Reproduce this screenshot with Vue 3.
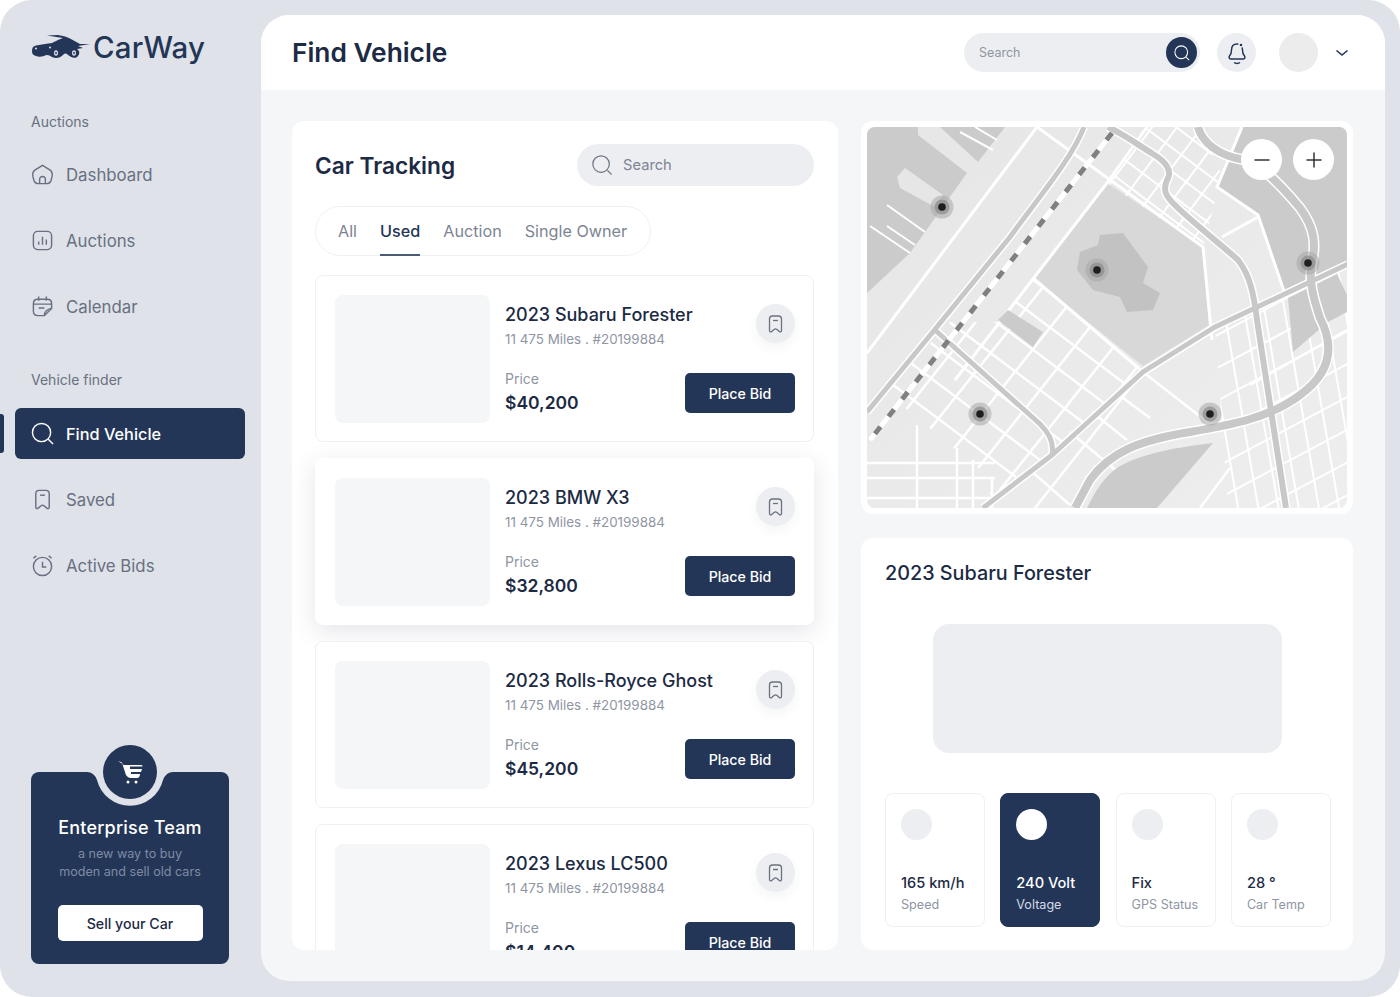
<script setup>
const cars = [
  { name: '2023 Subaru Forester', price: '$40,200' },
  { name: '2023 BMW X3', price: '$32,800', lifted: true },
  { name: '2023 Rolls-Royce Ghost', price: '$45,200' },
  { name: '2023 Lexus LC500', price: '$14,400' },
];
const stats = [
  { value: '165 km/h', label: 'Speed' },
  { value: '240 Volt', label: 'Voltage', active: true },
  { value: 'Fix', label: 'GPS Status' },
  { value: '28 °', label: 'Car Temp' },
];
const tabs = ['All', 'Used', 'Auction', 'Single Owner'];

// street grids of the map: two families of parallel lines round a centre point
const family = (cx, cy, dx, dy, step, n, len = 420) => {
  const out = [];
  for (let i = -n; i <= n; i++) {
    const ox = cx - dy * step * i;
    const oy = cy + dx * step * i;
    out.push({ x1: ox - dx * len, y1: oy - dy * len, x2: ox + dx * len, y2: oy + dy * len });
  }
  return out;
};
const blockGrid = [...family(1040, 390, 0.8, 0.6, 28, 7), ...family(1040, 390, 0.62, -0.78, 31, 7)];
const topGrid = [...family(1170, 170, 0.8, 0.6, 19, 5, 120), ...family(1170, 170, 0.6, -0.8, 20, 5, 120)];
const rightGrid = [...family(1280, 400, 0.17, 0.98, 20, 6, 200), ...family(1280, 400, 0.88, -0.47, 29, 6, 200)];
const pins = [[942, 207], [1097, 270], [1308, 263], [980, 414], [1210, 414]];

// the same centre lines are stroked twice: white casing, then grey road
const roads = [
  { d: 'M1084 127C1072 158 1040 196 1010 237L932 333L867 412', w: 5 },
  { d: 'M1108 127C1125 135 1140 146 1153 154C1165 161 1172 170 1168 178C1162 190 1165 196 1177 207C1190 220 1225 248 1238 260C1250 275 1254 295 1257 320L1286 508', w: 6 },
  { d: 'M1348 264L1215 327L1143 372L1052 455L983 508', w: 5 },
  { d: 'M935 330L1040 424C1052 436 1054 446 1052 455', w: 5 },
  { d: 'M1198 127C1202 142 1218 156 1245 160C1262 165 1285 190 1300 208C1315 228 1316 245 1312 262C1308 280 1314 300 1320 318C1334 345 1332 372 1300 395C1270 418 1230 425 1190 432C1140 440 1110 452 1090 480L1075 508', w: 8 },
];
</script>

<template>
  <div class="frame">
    <aside class="side">
      <div class="logo">
        <svg class="logo-mark" width="60" height="27" viewBox="0 0 60 27">
          <path d="M1 17C1 14 2 12 5 11.500L14 10L21 9L27 6L32 4L16 1.500L27 1C33 2 36 3 39 4.500L49 10L59 10L47 12L52 14L46 15C49 17 49 20 46 23C43 25 40 23 37 21C35 19 34 19 32 21C29 24 25 25 21 23C18 21 16 20 13 22C10 23 7 23 5 22C2 21 1 20 1 17Z" fill="#233657" />
          <ellipse cx="25" cy="19" rx="2" ry="2.800" fill="#dfe2e8" />
          <ellipse cx="25" cy="19" rx=".8" ry="1.300" fill="#233657" />
          <ellipse cx="43" cy="19" rx="2" ry="2.800" fill="#dfe2e8" />
          <ellipse cx="43" cy="19" rx=".8" ry="1.300" fill="#233657" />
          <circle cx="19" cy="13.500" r="1" fill="#dfe2e8" />
          <circle cx="5" cy="14.500" r="1" fill="#dfe2e8" />
        </svg>
        <span class="logo-text">CarWay</span>
      </div>

      <p class="nav-label first">Auctions</p>
      <a class="nav-item">
        <svg class="nav-ico" viewBox="0 0 24 24"><path d="M12 2.500L20 7.500C22 9 22.500 11 22 14L21 18C20.300 20.500 18.500 21.500 16 21.500H8C5.500 21.500 3.700 20.500 3 18L2 14C1.500 11 2 9 4 7.500Z" /><path d="M9 21.500V17C9 15.300 10.300 14 12 14S15 15.300 15 17V21.500" /></svg>
        Dashboard
      </a>
      <a class="nav-item">
        <svg class="nav-ico" viewBox="0 0 24 24"><rect x="2.500" y="2.500" width="19" height="19" rx="4.500" /><path d="M8 13V16.500M12 8V16.500M16 11V16.500" /></svg>
        Auctions
      </a>
      <a class="nav-item">
        <svg class="nav-ico" viewBox="0 0 24 24"><path d="M21.500 14V9C21.500 6 20 4.500 17 4.500H7C4 4.500 2.500 6 2.500 9V17C2.500 20 4 21.500 7 21.500H14Z" /><path d="M8 1.500V6M16 1.500V6M2.500 9.500H21.500M8 13.500H14M14 21.500C14 17 16 15 21.500 14" /></svg>
        Calendar
      </a>

      <p class="nav-label second">Vehicle finder</p>
      <div class="active-mark"></div>
      <a class="nav-item active">
        <svg class="nav-ico" viewBox="0 0 24 24"><circle cx="11" cy="11" r="9.500" /><path d="M18 18L23 23" /></svg>
        Find Vehicle
      </a>
      <a class="nav-item">
        <svg class="nav-ico" viewBox="0 0 24 24"><path d="M5 6C5 4 6.500 2.500 8.500 2.500H15.500C17.500 2.500 19 4 19 6V20C19 21.500 17.500 22 16.500 21L13.500 18.500C12.500 17.700 11.500 17.700 10.500 18.500L7.500 21C6.500 22 5 21.500 5 20Z" /><path d="M9.500 7.500H14.500" /></svg>
        Saved
      </a>
      <a class="nav-item">
        <svg class="nav-ico" viewBox="0 0 24 24"><circle cx="12" cy="13" r="9.500" /><path d="M12 8V13.500H16M2.500 4.500L5.500 2M21.500 4.500L18.500 2" /></svg>
        Active Bids
      </a>

      <div class="promo">
        <svg class="promo-notch" width="90" height="36" viewBox="0 0 90 36"><path d="M2 0Q9 0 12 8A34 34 0 0 0 78 8Q81 0 88 0Z" fill="#dfe2e8" /></svg>
        <div class="promo-badge">
          <svg width="26" height="24" viewBox="0 0 26 24">
            <path d="M1 1L5 2.500C6 6 7 9 8 12C9 16 11 18 15 18H20C22 18 23 16 23 14H14V12H24L25 9H13V6.500H25.500C25.500 5.500 25 5 24 5H7Z" fill="#fff" />
            <circle cx="11" cy="22" r="1.500" fill="#fff" /><circle cx="19" cy="22" r="1.500" fill="#fff" />
          </svg>
        </div>
        <h4>Enterprise Team</h4>
        <p>a new way to buy<br>moden and sell old cars</p>
        <button class="sell">Sell your Car</button>
      </div>
    </aside>

    <main class="main">
      <header class="top">
        <h1>Find Vehicle</h1>
        <div class="top-search">
          <span>Search</span>
          <i class="top-search-btn">
            <svg width="18" height="18" viewBox="0 0 24 24" fill="none" stroke="#fff" stroke-width="1.400"><circle cx="11" cy="11" r="8.500" /><path d="M17.500 17.500L21.500 21.500" /></svg>
          </i>
        </div>
        <i class="bell">
          <svg width="20" height="24" viewBox="0 0 20 24" fill="none" stroke="#233657" stroke-width="1.500">
            <path d="M10 3C6 3 4.500 6 4.500 9C4.500 12 4 13.500 2.500 15C1.500 16.500 2.500 18 4 18H16C17.500 18 18.500 16.500 17.500 15C16 13.500 15.500 12 15.500 9C15.500 6 14 3 10 3Z" />
            <path d="M7 21.500C8.500 22.800 11.500 22.800 13 21.500" /><circle cx="14" cy="4" r="2" fill="#233657" stroke="#eceef1" />
          </svg>
        </i>
        <i class="avatar"></i>
        <svg class="chev" width="14" height="14" viewBox="0 0 14 14" fill="none" stroke="#233657" stroke-width="1.600"><path d="M1.500 4.500L7 9L12.500 4.500" /></svg>
      </header>

      <div class="body">
        <section class="list-card">
          <div class="list-head">
            <h2>Car Tracking</h2>
            <div class="list-search">
              <svg width="22" height="22" viewBox="0 0 24 24" fill="none" stroke="#6c7280" stroke-width="1.300"><circle cx="11" cy="11" r="9" /><path d="M18 18L22.500 22.500" /></svg>
              <span>Search</span>
            </div>
          </div>
          <div class="tabs">
            <span v-for="t in tabs" :key="t" class="tab" :class="{ on: t === 'Used' }">{{ t }}</span>
          </div>
          <article v-for="c in cars" :key="c.name" class="car" :class="{ lifted: c.lifted }">
            <div class="car-pic"></div>
            <div class="car-info">
              <div class="car-top">
                <div>
                  <h3>{{ c.name }}</h3>
                  <p class="miles">11 475 Miles . #20199884</p>
                </div>
                <i class="mark">
                  <svg width="15" height="18" viewBox="0 0 15 18" fill="none" stroke="#6c7280" stroke-width="1.300"><path d="M1.500 4C1.500 2.300 2.800 1 4.500 1H10.500C12.200 1 13.500 2.300 13.500 4V15.500C13.500 17 12.200 17.300 11.300 16.500L9 14.500C8 13.700 7 13.700 6 14.500L3.700 16.500C2.800 17.300 1.500 17 1.500 15.500Z" /><path d="M5 5.500H10" /></svg>
                </i>
              </div>
              <div class="car-bottom">
                <div class="car-price">
                  <p class="price-label">Price</p>
                  <p class="price">{{ c.price }}</p>
                </div>
                <button class="bid">Place Bid</button>
              </div>
            </div>
          </article>
        </section>

        <div class="right">
          <section class="map-card">
            <svg class="map" width="480" height="381" viewBox="867 127 480 381">
              <defs>
                <clipPath id="cb"><path d="M1033 278L1143 372L1052 455L983 508L995 482L886 392L950 322L1000 322Z" /></clipPath>
                <clipPath id="ct"><path d="M1107 183L1147 127H1200L1222 175L1203 247Z" /></clipPath>
                <clipPath id="cr"><path d="M1215 328L1347 262V508H1260L1228 508Z" /></clipPath>
                <linearGradient id="band" x1="0" y1="0" x2="1" y2="1"><stop offset="0" stop-color="#e6e6e6" /><stop offset="1" stop-color="#eeeeee" /></linearGradient>
              </defs>
              <rect x="867" y="127" width="480" height="381" fill="url(#band)" />
              <path d="M867 127H918V135L967 173L910 253L867 293Z" fill="#cbcbcb" />
              <path d="M897 177L905 168L943 195L935 207L900 188Z" fill="#e6e6e6" />
              <path d="M940 127H1005L978 162Z" fill="#cbcbcb" />
              <path d="M1107 183L1203 247L1209 325L1143 366L1033 278Z" fill="#d8d8d8" />
              <path d="M1100 235L1123 233L1137 252L1148 267L1143 283L1160 293L1153 310L1127 312L1120 297L1093 290L1077 270L1080 252L1098 245Z" fill="#c2c2c2" />
              <path d="M1242 127H1347V264L1285 294L1258 215L1217 187Z" fill="#cbcbcb" />

              <g stroke="#fff" stroke-width="2" fill="none">
                <path d="M887 205L925 232M870 226L910 253M887 226L915 245M960 132L993 150M975 127L997 140" />
                <g clip-path="url(#cb)"><line v-for="(l, i) in blockGrid" :key="i" v-bind="l" stroke-width="2.500" /></g>
                <g clip-path="url(#ct)"><line v-for="(l, i) in topGrid" :key="i" v-bind="l" /></g>
                <g clip-path="url(#cr)"><line v-for="(l, i) in rightGrid" :key="i" v-bind="l" /></g>
                <path d="M867 463H995M867 478H995M867 498H995M917 425V508M957 448V508M973 460V508M992 478V508" stroke-width="2.500" />
                <path d="M867 353L1037 127M1037 127L1203 247L1212 340M1107 183L955 380M1033 278L1143 372M1242 127L1217 187L1258 215L1285 294M1147 127L1107 183M1222 237L1258 217" stroke-width="3" />
                <path d="M1143 372L1215 428M1130 388L1035 508M1200 508L1230 468M1347 330L1250 385M1070 432L1118 472M1092 412L1127 440M1115 392L1150 418M1030 470L1070 505" stroke-width="2.500" />
              </g>

              <path d="M998 320L1008 310L1043 332L1033 347Z" fill="#cbcbcb" />
              <path d="M1288 298L1337 274L1347 295V312L1328 322L1293 352Z" fill="#cbcbcb" />
              <path d="M1213 443C1170 448 1140 455 1120 466C1104 476 1095 492 1087 508H1157Z" fill="#cbcbcb" />

              <g fill="none">
                <path v-for="r in roads" :key="r.d" :d="r.d" stroke="#fff" :stroke-width="r.w + 3" />
                <path v-for="r in roads" :key="r.d" :d="r.d" stroke="#c8c8c8" :stroke-width="r.w" />
                <path d="M1112 133L870 440" stroke="#fff" stroke-width="5" />
                <path d="M1112 133L870 440" stroke="#808080" stroke-width="5" stroke-dasharray="9 13" />
              </g>

              <g v-for="p in pins" :key="p[0]">
                <circle :cx="p[0]" :cy="p[1]" r="11.500" fill="#a8a8a8" opacity=".55" />
                <circle :cx="p[0]" :cy="p[1]" r="7.500" fill="#8a8a8a" opacity=".7" />
                <circle :cx="p[0]" :cy="p[1]" r="3.800" fill="#1e1e1e" />
              </g>
            </svg>
            <button class="zoom minus"><svg width="18" height="18" viewBox="0 0 18 18" stroke="#333" stroke-width="1.500"><path d="M1.500 9H16.500" /></svg></button>
            <button class="zoom plus"><svg width="18" height="18" viewBox="0 0 18 18" stroke="#333" stroke-width="1.500"><path d="M1.500 9H16.500M9 1.500V16.500" /></svg></button>
          </section>

          <section class="detail">
            <h3>2023 Subaru Forester</h3>
            <div class="detail-pic"></div>
            <div class="stats">
              <div v-for="s in stats" :key="s.label" class="stat" :class="{ active: s.active }">
                <i class="stat-dot"></i>
                <b>{{ s.value }}</b>
                <span>{{ s.label }}</span>
              </div>
            </div>
          </section>
        </div>
      </div>
    </main>
  </div>
</template>

<style>
html, body { background: #fff; }
</style>

<style scoped>
* { box-sizing: border-box; }
h1, h2, h3, h4, p { margin: 0; }
i { display: block; font-style: normal; }
button { font-family: inherit; border: 0; cursor: pointer; }

.frame {
  width: 1400px; height: 997px; overflow: hidden;
  display: flex; position: relative;
  background: #dfe2e8; border-radius: 32px;
  font-family: Inter, "Liberation Sans", sans-serif;
  color: #1c2a44;
}

/* sidebar */
.side { width: 261px; flex: none; padding: 31px 16px 0 31px; display: flex; flex-direction: column; position: relative; }
.logo { display: flex; align-items: center; height: 32px; gap: 2px; }
.logo-mark { flex: none; }
.logo-text { font-size: 29.500px; font-weight: 500; color: #233657; letter-spacing: .2px; }
.nav-label { font-size: 14px; line-height: 20px; color: #687082; }
.nav-label.first { margin-top: 49px; }
.nav-label.second { margin-top: 38px; }
.nav-item {
  display: flex; align-items: center; gap: 12px;
  height: 51px; margin-top: 15px;
  font-size: 16.800px; color: #687082;
}
.nav-label + .nav-item { margin-top: 17px; }
.active-mark + .nav-item { margin-top: 18px; }
.nav-ico { width: 23px; height: 23px; fill: none; stroke: #687082; stroke-width: 1.500; flex: none; }
.nav-item.active {
  background: #233657; color: #fff; font-weight: 500; font-size: 16.300px;
  margin-left: -16px; padding-left: 16px; border-radius: 6px;
  width: 230px;
}
.nav-item.active .nav-ico { stroke: #fff; }
.active-mark { position: absolute; left: 0; top: 414px; width: 4px; height: 39px; background: #233657; border-radius: 0 3px 3px 0; }

.promo {
  position: absolute; left: 31px; top: 772px; width: 198px; height: 192px;
  background: #233657; border-radius: 8px; color: #fff; text-align: center;
  padding-top: 45px;
}
.promo-notch { position: absolute; left: 54px; top: 0; }
.promo-badge {
  position: absolute; left: 72px; top: -27px; width: 54px; height: 54px; border-radius: 50%;
  background: #233657; display: flex; align-items: center; justify-content: center;
}
.promo h4 { font-size: 18px; line-height: 22px; font-weight: 500; letter-spacing: .2px; }
.promo p { margin-top: 6px; font-size: 12.600px; line-height: 18px; color: #7f8ba3; }
.sell {
  display: block; margin: 24px auto 0; width: 145px; height: 36px;
  background: #fff; border-radius: 5px; color: #1c2a44;
  font-size: 14.200px; font-weight: 500;
}

/* main */
.main {
  position: absolute; left: 261px; top: 15px; width: 1124px; height: 966px;
  background: #f5f6f8; border-radius: 28px; overflow: hidden;
}
.top { height: 75px; background: #fff; display: flex; align-items: center; padding: 0 36px 0 31px; }
.top h1 { font-size: 26.300px; font-weight: 600; color: #1c2a44; margin-right: auto; }
.top-search {
  width: 236px; height: 39px; border-radius: 20px; background: #eceef1;
  display: flex; align-items: center; justify-content: space-between;
  padding: 0 3px 0 15px; font-size: 12.500px; color: #8f95a3;
}
.top-search span { margin-top: -1px; }
.top-search-btn { width: 31px; height: 31px; border-radius: 50%; background: #233657; display: flex; align-items: center; justify-content: center; }
.bell { width: 39px; height: 39px; margin-left: 17px; border-radius: 50%; background: #eceef1; display: flex; align-items: center; justify-content: center; }
.avatar { width: 39px; height: 39px; margin-left: 23px; border-radius: 50%; background: #ececec; }
.chev { margin-left: 17px; }

.body { display: flex; gap: 23px; padding: 31px 32px 31px 31px; height: 891px; }

.list-card { width: 546px; flex: none; height: 829px; background: #fff; border-radius: 12px; padding: 23px 24px 0 23px; overflow: hidden; }
.list-head { display: flex; align-items: center; justify-content: space-between; height: 42px; }
.list-head h2 { font-size: 22.700px; font-weight: 600; color: #1c2a44; }
.list-search {
  width: 237px; height: 42px; border-radius: 21px; background: #eceef1;
  display: flex; align-items: center; gap: 10px; padding-left: 14px;
  font-size: 14.700px; color: #7d8494;
}
.tabs {
  margin-top: 20px; width: 336px; height: 50px; border: 1px solid #eff0f3; border-radius: 25px;
  display: flex; gap: 23px; padding-left: 22px; align-items: center;
  position: relative;
}
.tab { font-size: 16.200px; color: #7d8494; line-height: 48px; height: 49px; white-space: nowrap; }
.tab.on { color: #233657; font-weight: 500; border-bottom: 2px solid #4c5a74; }

.car {
  margin-top: 16px; height: 167px; padding: 19px 18px 17px 19px;
  display: flex; gap: 15px;
  border: 1px solid #eff0f3; border-radius: 8px; background: #fff;
}
.tabs + .car { margin-top: 19px; }
.car.lifted { border-color: transparent; box-shadow: 0 6px 24px rgba(40, 50, 75, .13); }
.car-pic { width: 155px; height: 128px; flex: none; background: #f5f6f8; border-radius: 8px; }
.car-info { flex: 1; display: flex; flex-direction: column; justify-content: space-between; }
.car-top { display: flex; justify-content: space-between; align-items: flex-start; padding-top: 8px; }
.car-top h3 { font-size: 18px; line-height: 24px; font-weight: 500; color: #1c2a44; white-space: nowrap; }
.miles { margin-top: 2px; font-size: 13.400px; line-height: 20px; color: #8f95a3; }
.mark { width: 39px; height: 39px; margin-top: 1px; border-radius: 50%; background: #eceef1; display: flex; align-items: center; justify-content: center; box-shadow: 0 5px 12px rgba(40, 50, 75, .05); }
.car-bottom { display: flex; justify-content: space-between; align-items: flex-end; padding-bottom: 11px; }
.car-price { margin-bottom: -3px; }
.price-label { font-size: 14px; line-height: 20px; color: #8f95a3; }
.price { margin-top: 1px; font-size: 17.500px; line-height: 26px; font-weight: 600; color: #1c2a44; }
.bid { width: 110px; height: 40px; border-radius: 5px; background: #233657; color: #fff; font-size: 14.200px; font-weight: 500; }

.right { width: 492px; flex: none; display: flex; flex-direction: column; gap: 24px; }
.map-card { position: relative; height: 393px; padding: 6px; background: #fff; border-radius: 12px; }
.map { display: block; border-radius: 8px; }
.zoom { position: absolute; top: 18px; width: 41px; height: 41px; padding: 0; border-radius: 50%; background: #fff; display: flex; align-items: center; justify-content: center; }
.minus { left: 380px; }
.plus { left: 432px; }

.detail { height: 412px; background: #fff; border-radius: 12px; padding: 21px 20px 0 24px; }
.detail h3 { font-size: 19.800px; line-height: 28px; font-weight: 500; color: #1c2a44; }
.detail-pic { width: 349px; height: 129px; margin: 37px 0 0 48px; background: #eceef1; border-radius: 16px; }
.stats { display: flex; gap: 15.300px; margin-top: 40px; }
.stat { flex: none; width: 100px; height: 134px; padding: 15px; border: 1px solid #eff0f3; border-radius: 8px; display: flex; flex-direction: column; font-size: 12.600px; color: #8f95a3; }
.stat-dot { flex: none; width: 31px; height: 31px; border-radius: 50%; background: #eceef1; margin-bottom: 33px; }
.stat b { font-size: 14.600px; line-height: 20px; font-weight: 500; color: #1c2a44; white-space: nowrap; }
.stat span { margin-top: 3px; line-height: 18px; white-space: nowrap; }
.stat.active { background: #233657; border-color: #233657; color: #d5dbe6; }
.stat.active b { color: #fff; }
.stat.active .stat-dot { background: #fff; }
</style>
